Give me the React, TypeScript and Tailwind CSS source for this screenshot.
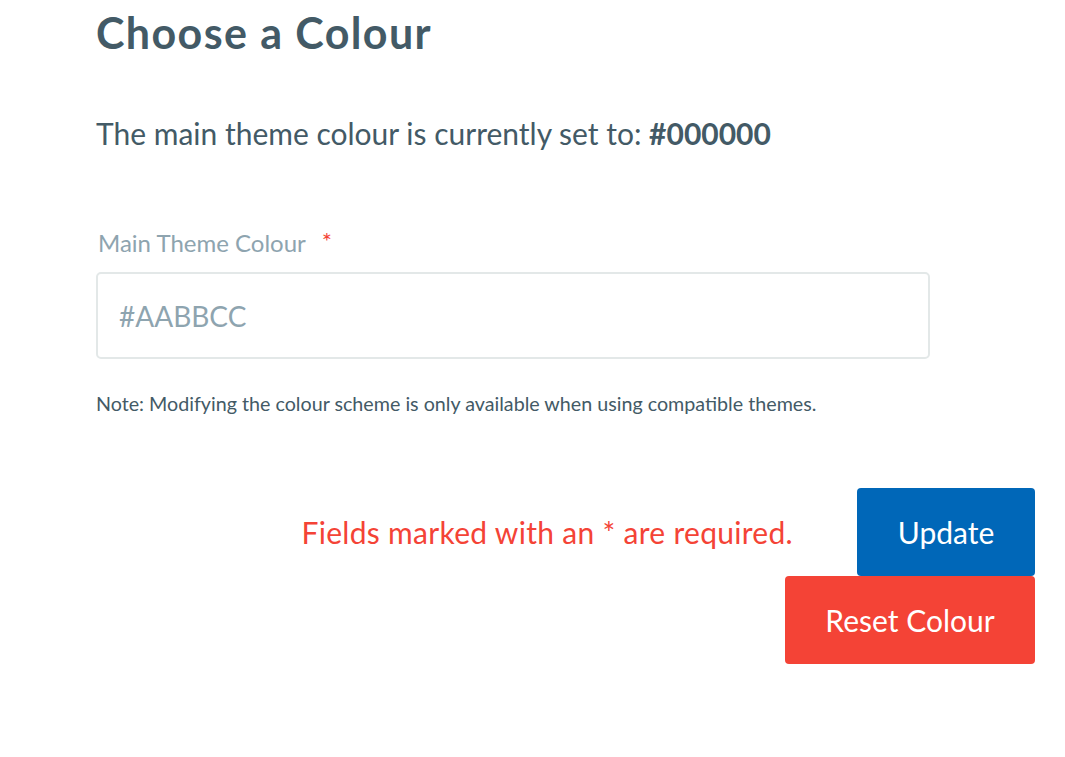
import React from "react";

const font = { fontFamily: "Lato, 'Noto Sans', sans-serif" };

export default function App() {
  return (
    <div className="min-h-[757px] w-full bg-white pl-[96px] pr-[30px]" style={font}>
      <h1 className="pt-[7px] text-[43px] font-bold leading-[52px] tracking-[1.4px] text-[#435a66]">
        Choose a Colour
      </h1>
      <p className="mt-[56px] text-[30px] leading-[36px] text-[#435a66]">
        The main theme colour is currently set to: <strong className="font-bold">#000000</strong>
      </p>
      <div className="mt-[78px] flex items-start pl-[2px] text-[24px] leading-[28px] text-[#8ea4af]">
        <span>Main Theme Colour</span>
        <span className="ml-[16px] text-[24px] leading-[24px] text-[#f44336]">*</span>
      </div>
      <div className="mt-[15px] w-[834px]">
        <input
          type="text"
          placeholder="#AABBCC"
          className="h-[87px] w-full rounded-[5px] border-2 border-[#e3e8e8] bg-white px-[21px] text-[28px] text-[#435a66] outline-none placeholder:text-[#8ea4af]"
          style={font}
        />
      </div>
      <p className="mt-[33px] text-[19.7px] leading-[24px] text-[#435a66]">
        Note: Modifying the colour scheme is only available when using compatible themes.
      </p>
      <div className="mt-[72px] flex items-center justify-end">
        <span className="mr-[64px] text-[30px] leading-[36px] tracking-[0.3px] text-[#f44336]">
          Fields marked with an * are required.
        </span>
        <button className="h-[88px] w-[178px] rounded-[4px] bg-[#0067b8] text-[30px] text-white">
          Update
        </button>
      </div>
      <div className="flex justify-end">
        <button className="h-[88px] w-[250px] rounded-[4px] bg-[#f44336] text-[30px] text-white">
          Reset Colour
        </button>
      </div>
    </div>
  );
}
